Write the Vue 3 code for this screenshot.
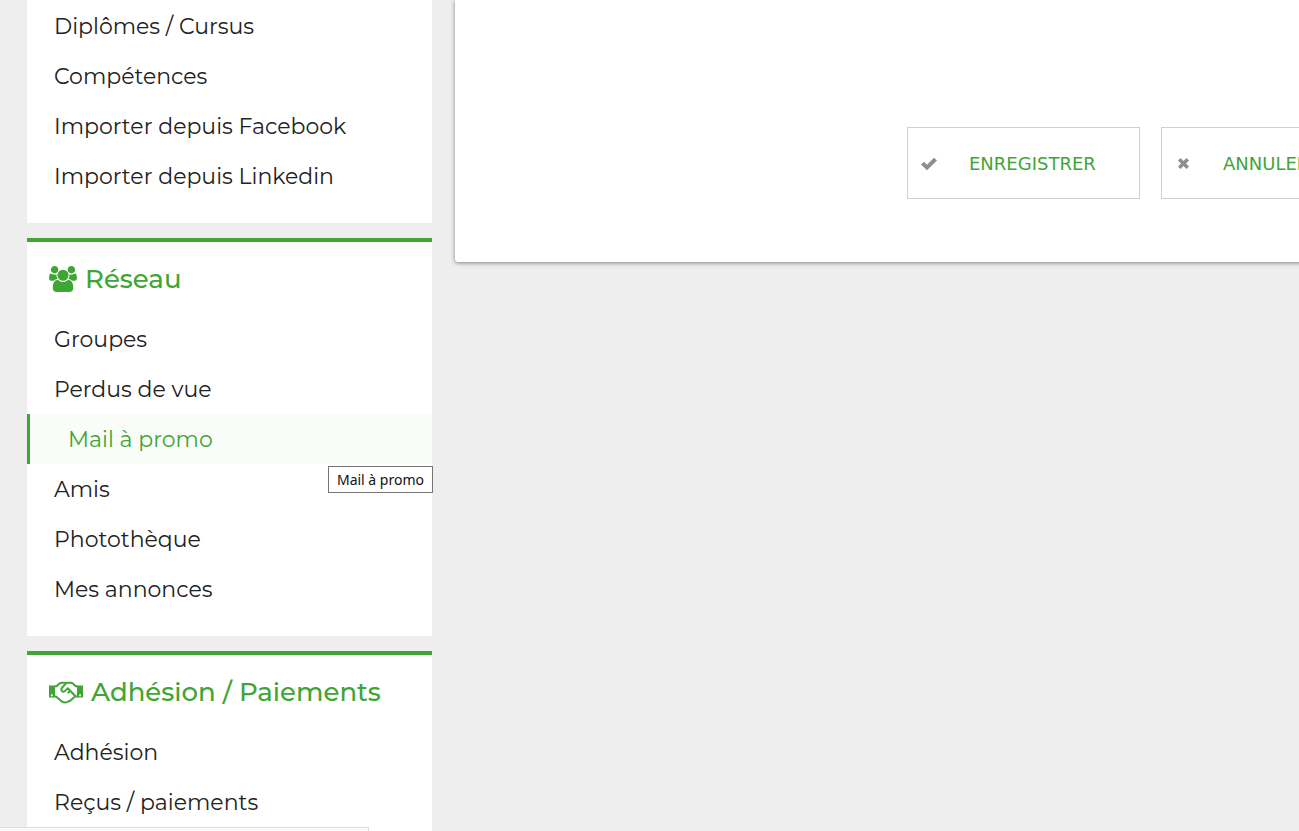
<script setup>
const sections = [
  {
    id: 'profil',
    items: ['Diplômes / Cursus', 'Compétences', 'Importer depuis Facebook', 'Importer depuis Linkedin'],
  },
  {
    id: 'reseau',
    title: 'Réseau',
    items: ['Groupes', 'Perdus de vue', 'Mail à promo', 'Amis', 'Photothèque', 'Mes annonces'],
  },
  {
    id: 'adhesion',
    title: 'Adhésion / Paiements',
    items: ['Adhésion', 'Reçus / paiements'],
  },
]
const active = 'Mail à promo'
</script>

<template>
  <div class="page">
    <nav class="sidebar" aria-label="Menu">
      <section v-for="section in sections" :key="section.id" class="panel" :class="{ titled: section.title }">
        <h2 v-if="section.title" class="title">
          <svg v-if="section.id === 'reseau'" class="users" viewBox="0 0 1920 1792" aria-hidden="true">
            <path d="M593 896q-162 5-265 128H194q-82 0-138-40.500T0 865q0-353 124-353 6 0 43.500 21t97.500 42.500T384 597q67 0 133-23-5 37-5 66 0 139 81 256zm1071 637q0 120-73 189.500t-194 69.500H523q-121 0-194-69.500T256 1533q0-53 3.500-103.500t14-109T300 1212t43-97.500 62-81 85.500-53.500T602 960q10 0 43 21.500t73 48 107 48 135 21.500 135-21.500 107-48 73-48 43-21.500q61 0 111.500 20t85.500 53.500 62 81 43 97.500 26.500 108.500 14 109 3.500 103.500zM640 256q0 106-75 181t-181 75-181-75-75-181 75-181T384 0t181 75 75 181zm704 384q0 159-112.500 271.500T960 1024 688.500 911.500 576 640t112.500-271.500T960 256t271.500 112.500T1344 640zm576 225q0 78-56 118.500t-138 40.500h-134q-103-123-265-128 81-117 81-256 0-29-5-66 66 23 133 23 59 0 119-21.500t97.500-42.500 43.500-21q124 0 124 353zm-128-609q0 106-75 181t-181 75-181-75-75-181 75-181 181-75 181 75 75 181z" />
          </svg>
          <svg v-else class="handshake" viewBox="0 0 34 23" aria-hidden="true">
            <path fill-rule="evenodd" d="M0 4.500h6v12H0zM2.800 13.200a1 1 0 1 0 .1 0zM28 4.500h6v12h-6zM31 13.200a1 1 0 1 0 .1 0z" />
            <path class="line" d="M5.500 5.300H7.500L10.500 2.500Q11.500 1.700 13 1.700H15Q16.200 1.700 17 2.300Q17.800 1.700 19.300 1.700H21.500Q23 1.700 24 2.600L26.700 5.300H28.500M5.500 15.500H7L12.800 20.400Q15.500 22.400 18.500 20.900L21.500 19.500L23.500 17.700L26 15.500H28.500M17 2.300L12.800 7Q11.700 8.900 13.100 10.200Q14.600 11.400 16.100 9.900L18.800 7.200L26.500 15.300M21.600 9L18.800 12.100" />
          </svg>
          <span>{{ section.title }}</span>
        </h2>
        <ul class="list">
          <li v-for="item in section.items" :key="item" class="item">
            <a href="#" class="link" :class="{ active: item === active }">{{ item }}</a>
            <span v-if="item === active" class="tooltip" role="tooltip">{{ item }}</span>
          </li>
        </ul>
      </section>
    </nav>

    <main class="card">
      <button type="button" class="action">
        <svg viewBox="0 0 18 16" aria-hidden="true"><path d="M1 9.500 4 6.700l3 3 7-7 3 2.700L7 15.200z" /></svg>
        <span>ENREGISTRER</span>
      </button>
      <button type="button" class="action">
        <svg viewBox="0 0 18 16" aria-hidden="true"><path d="M4 5.500 6.500 3 9.500 6l3-3L15 5.500 12 8.500l3 3L12.500 14l-3-3-3 3L4 11.500l3-3z" /></svg>
        <span>ANNULER</span>
      </button>
    </main>

    <div class="status"></div>
  </div>
</template>

<style>
body {
  background: #eee;
}
</style>

<style scoped>
.page {
  display: flex;
  align-items: flex-start;
  gap: 23px;
  height: 100vh;
  padding-left: 27px;
  box-sizing: border-box;
  overflow: hidden;
  background: #eee;
  font-family: Montserrat, Inter, "Liberation Sans", sans-serif;
}
.sidebar {
  flex: none;
  width: 405px;
  display: flex;
  flex-direction: column;
  gap: 15px;
}
.panel {
  padding: 1px 0 22px;
  background: #fff;
}
.panel.titled {
  padding-top: 0;
  border-top: 4px solid #3fa535;
}
.title {
  display: flex;
  align-items: center;
  gap: 8px;
  height: 72px;
  margin: 0;
  padding: 2px 0 0 22px;
  box-sizing: border-box;
  color: #3fa535;
  font-size: 26px;
  font-weight: 500;
  white-space: nowrap;
}
.title svg {
  fill: currentColor;
}
.users {
  width: 28px;
  height: 26px;
}
.handshake {
  width: 34px;
  height: 23px;
}
.handshake .line {
  fill: none;
  stroke: currentColor;
  stroke-width: 2;
  stroke-linejoin: round;
}
.list {
  margin: 0;
  padding: 0;
  list-style: none;
}
.item {
  position: relative;
}
.link {
  display: block;
  padding: 2px 0 0 27px;
  color: #222;
  font-size: 22px;
  line-height: 48px;
  text-decoration: none;
  white-space: nowrap;
}
.link.active {
  padding-left: 38px;
  border-left: 3px solid #3fa535;
  background: #fafcfa;
  color: #3fa535;
}
.tooltip {
  position: absolute;
  z-index: 1;
  top: 52px;
  right: -1px;
  padding: 1px 8px 0;
  border: 1px solid #767676;
  background: #fff;
  color: #111;
  font-family: "Segoe UI", "Noto Sans", sans-serif;
  font-size: 14px;
  line-height: 24px;
  white-space: nowrap;
}
.card {
  flex: 1;
  min-width: 0;
  display: flex;
  gap: 21px;
  margin-right: -8px;
  padding: 127px 0 63px 452px;
  border-radius: 0 0 0 3px;
  background: #fff;
  box-shadow: 0 1px 4px rgba(0, 0, 0, 0.45);
}
.action {
  flex: none;
  display: flex;
  align-items: center;
  gap: 31px;
  min-width: 233px;
  height: 72px;
  padding: 0 40px 0 12px;
  border: 1px solid #d0d0d0;
  background: #fff;
  color: #3fa535;
  font-family: Verdana, "DejaVu Sans", sans-serif;
  font-size: 18px;
}
.action svg {
  width: 18px;
  height: 16px;
  fill: #8e8e8e;
}
.status {
  position: fixed;
  bottom: 0;
  left: 0;
  width: 368px;
  height: 3px;
  border-top: 1px solid #ddd;
  border-right: 1px solid #ddd;
  background: #f9f9f9;
}
</style>
